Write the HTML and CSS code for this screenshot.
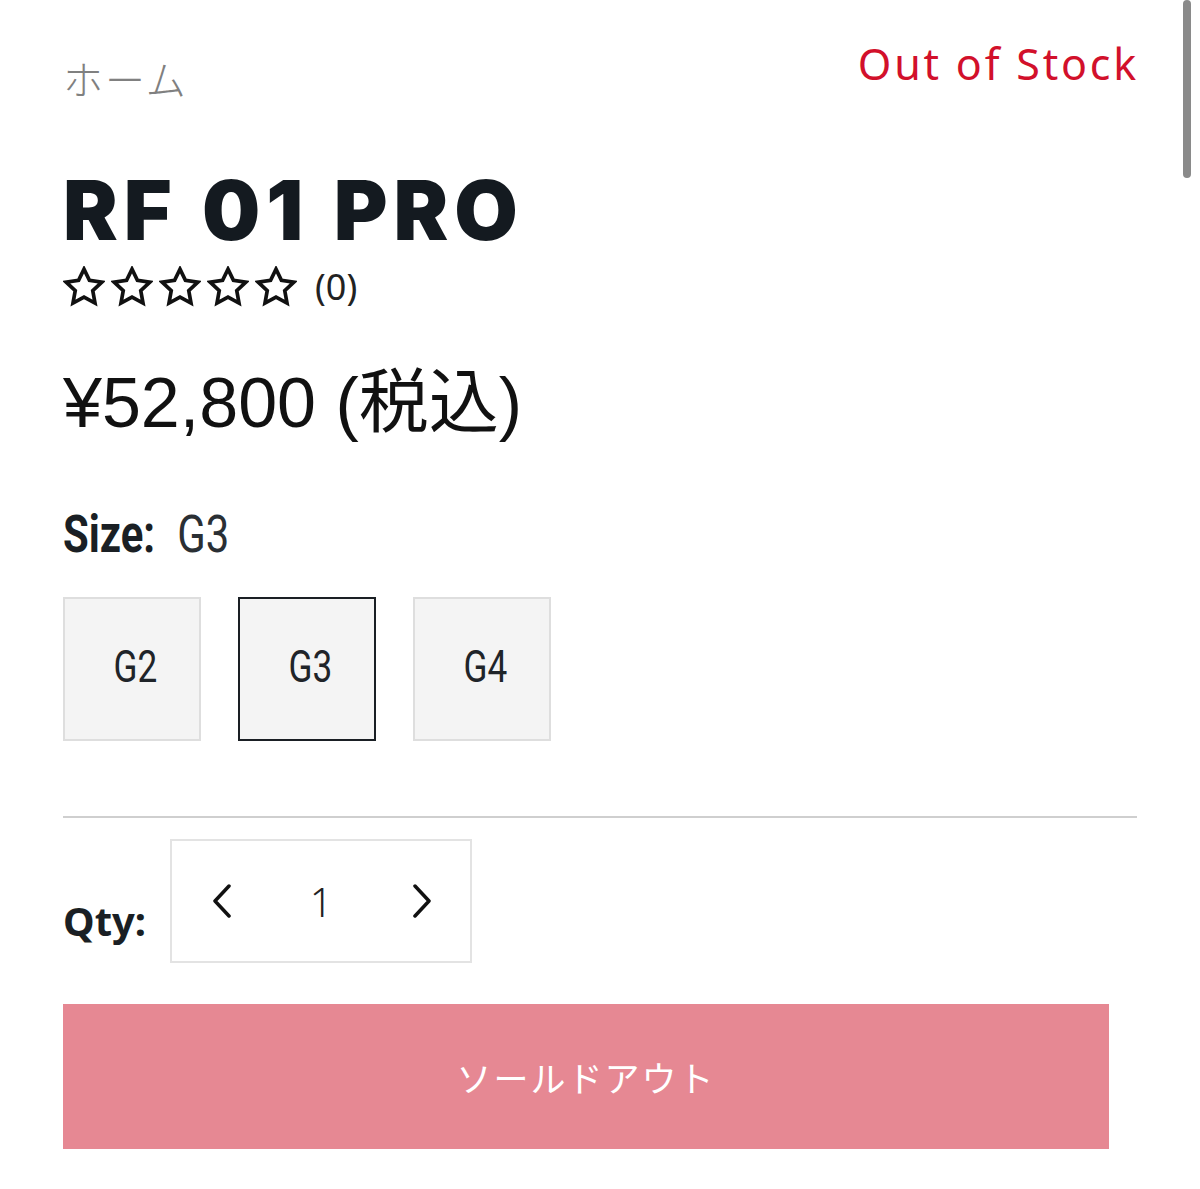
FILE: index.html
```html
<!DOCTYPE html>
<html>
<head>
  <title>RF 01 PRO</title>
  <link rel="stylesheet" href="styles.css">
</head>
<body>
  <div class="page">
    <!-- breadcrumb + stock -->
    <div class="top-row">
      <a class="breadcrumb" href="#">ホーム</a>
      <span class="stock">Out of Stock</span>
    </div>

    <h1 class="title">RF 01 PRO</h1>

    <div class="rating">
      <span class="stars">
        <svg viewBox="0 0 24 24"><polygon points="12,1.8 15.1,8.2 22.2,9.2 17,14.1 18.3,21.2 12,17.8 5.7,21.2 7,14.1 1.8,9.2 8.9,8.2"/></svg>
        <svg viewBox="0 0 24 24"><polygon points="12,1.8 15.1,8.2 22.2,9.2 17,14.1 18.3,21.2 12,17.8 5.7,21.2 7,14.1 1.8,9.2 8.9,8.2"/></svg>
        <svg viewBox="0 0 24 24"><polygon points="12,1.8 15.1,8.2 22.2,9.2 17,14.1 18.3,21.2 12,17.8 5.7,21.2 7,14.1 1.8,9.2 8.9,8.2"/></svg>
        <svg viewBox="0 0 24 24"><polygon points="12,1.8 15.1,8.2 22.2,9.2 17,14.1 18.3,21.2 12,17.8 5.7,21.2 7,14.1 1.8,9.2 8.9,8.2"/></svg>
        <svg viewBox="0 0 24 24"><polygon points="12,1.8 15.1,8.2 22.2,9.2 17,14.1 18.3,21.2 12,17.8 5.7,21.2 7,14.1 1.8,9.2 8.9,8.2"/></svg>
      </span>
      <span class="count">(0)</span>
    </div>

    <div class="price">¥52,800 (税込)</div>

    <div class="size-label"><b>Size:</b><span>G3</span></div>

    <div class="sizes">
      <button class="size"><span>G2</span></button>
      <button class="size selected"><span>G3</span></button>
      <button class="size"><span>G4</span></button>
    </div>

    <hr class="divider">

    <div class="qty-row">
      <span class="qty-label">Qty:</span>
      <div class="qty-box">
        <button class="qty-btn">
          <svg viewBox="0 0 20 34"><polyline points="17,2 3,17 17,32"/></svg>
        </button>
        <span class="qty-value">1</span>
        <button class="qty-btn">
          <svg viewBox="0 0 20 34"><polyline points="3,2 17,17 3,32"/></svg>
        </button>
      </div>
    </div>

    <button class="sold-out" disabled>ソールドアウト</button>
  </div>

  <div class="scroll-thumb"></div>
</body>
</html>
```

FILE: styles.css
```css
html, body {
  margin: 0;
  padding: 0;
  background: #fff;
}

body {
  font-family: "Noto Sans", "Noto Sans CJK JP", sans-serif;
  color: #111;
}

.page {
  width: 1074px;
  padding: 40px 0 0 63px;
}

.top-row {
  display: flex;
  justify-content: space-between;
  align-items: flex-start;
}

.breadcrumb {
  font-family: "Noto Sans CJK JP", sans-serif;
  font-weight: 300;
  font-size: 40px;
  line-height: 1;
  letter-spacing: 2px;
  color: #808080;
  text-decoration: none;
  margin-top: 18px;
}

.stock {
  font-family: "Noto Sans", "Noto Sans CJK JP", sans-serif;
  font-size: 43px;
  line-height: 1;
  letter-spacing: 2.8px;
  color: #d2102b;
  margin-top: 2px;
  margin-right: -2px;
}

.title {
  font-family: Inter, "Liberation Sans", sans-serif;
  font-weight: 900;
  font-size: 82px;
  line-height: 1;
  letter-spacing: 6px;
  word-spacing: 2px;
  color: #141a20;
  margin: 72px 0 0 0;
}

.rating {
  display: flex;
  align-items: center;
  margin-top: 14px;
}

.stars {
  display: flex;
  gap: 6px;
}

.stars svg {
  width: 42px;
  height: 42px;
  fill: none;
  stroke: #111;
  stroke-width: 2.1;
  stroke-linejoin: miter;
}

.count {
  font-size: 36px;
  line-height: 1;
  color: #222;
  margin-left: 18px;
}

.price {
  font-family: "Liberation Sans", "Noto Sans CJK JP", sans-serif;
  font-size: 70px;
  line-height: 1;
  color: #111;
  margin-top: 60px;
}

/* condensed labels */
.size-label {
  font-family: Roboto, "Liberation Sans", sans-serif;
  font-size: 51px;
  line-height: 1;
  color: #1a1f24;
  margin-top: 71px;
  transform: scaleX(0.82);
  transform-origin: left center;
}

.size-label b {
  font-weight: 700;
}

.size-label span {
  color: #2a2f34;
  margin-left: 27px;
}

.sizes {
  display: flex;
  gap: 37px;
  margin-top: 37px;
}

.size {
  width: 138px;
  height: 144px;
  background: #f4f4f4;
  border: 2px solid #dedede;
  font-family: Roboto, "Liberation Sans", sans-serif;
  font-size: 44px;
  color: #1f2429;
  padding: 0 0 4px 6px;
}

.size span {
  display: inline-block;
  transform: scaleX(0.8);
}

.size.selected {
  border-color: #1a1f24;
}

.divider {
  border: none;
  border-top: 2px solid #cfcfcf;
  margin: 75px 0 0 0;
}

.qty-row {
  display: flex;
  align-items: flex-end;
  gap: 24px;
  margin-top: 21px;
}

.qty-label {
  font-family: "Noto Sans", sans-serif;
  font-weight: 700;
  font-size: 40px;
  line-height: 1;
  color: #1a1f24;
  margin-bottom: 22px;
}

.qty-box {
  display: flex;
  align-items: center;
  justify-content: space-between;
  width: 298px;
  height: 120px;
  border: 2px solid #e3e3e3;
}

.qty-btn {
  background: none;
  border: none;
  padding: 0 38px 0 40px;
  display: flex;
}

.qty-btn svg {
  width: 20px;
  height: 34px;
  fill: none;
  stroke: #111;
  stroke-width: 3.5;
  stroke-linecap: round;
  stroke-linejoin: round;
}

.qty-value {
  font-family: "Noto Sans", sans-serif;
  font-weight: 300;
  font-size: 40px;
  color: #222;
}

.sold-out {
  display: block;
  width: 1046px;
  height: 145px;
  margin-top: 41px;
  background: #e68893;
  border: none;
  color: #fff;
  font-family: "Noto Sans CJK JP", sans-serif;
  font-size: 35px;
  letter-spacing: 2px;
}

/* fake overlay scrollbar */
.scroll-thumb {
  position: fixed;
  top: 0;
  right: 9px;
  width: 8px;
  height: 178px;
  border-radius: 4px;
  background: #8a8a8a;
}
```
